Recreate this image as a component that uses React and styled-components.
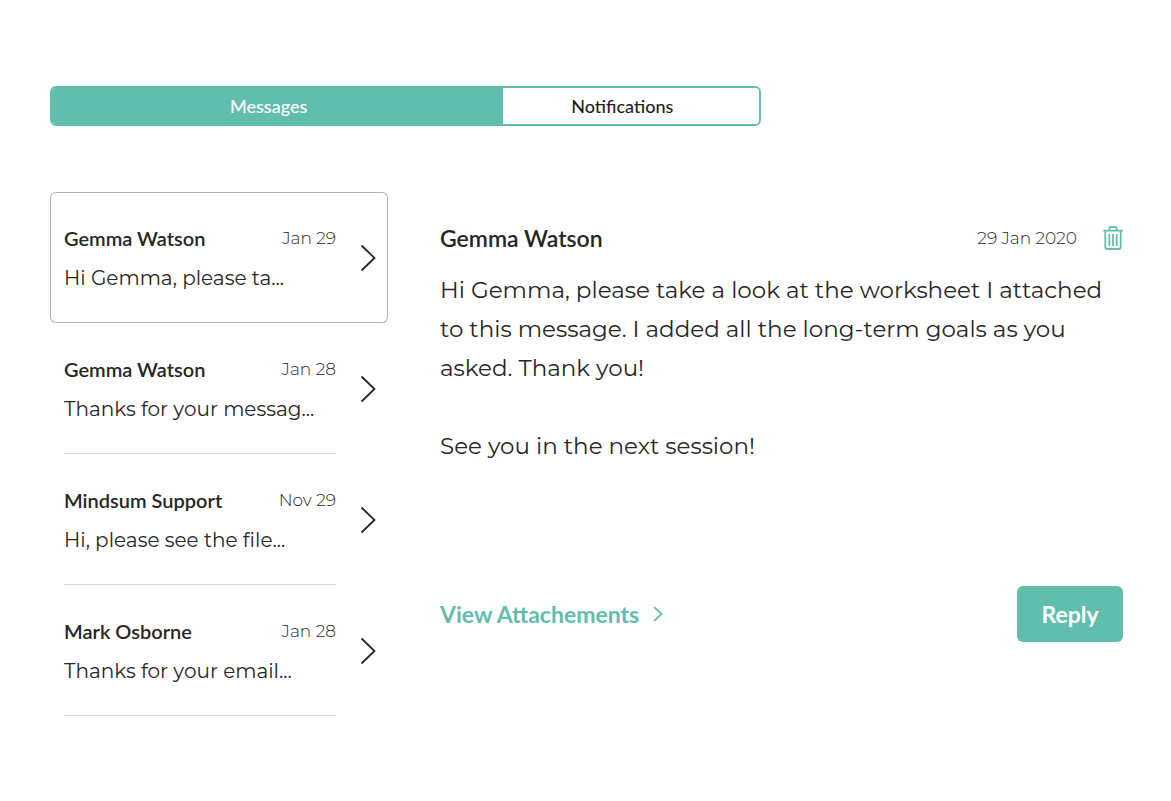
import React, { useState } from 'react'
import styled, { createGlobalStyle } from 'styled-components'

const GlobalStyle = createGlobalStyle`
* {
  box-sizing: border-box;
}

body {
  margin: 0;
  background: #fff;
  color: #262626;
  font-family: Montserrat, Inter, sans-serif;
}

button {
  padding: 0;
  border: none;
  background: none;
  color: inherit;
  font: inherit;
  cursor: pointer;
}
`

const Container = styled.main`
padding: 86px 48px 86px 50px;
`

const Tabs = styled.div`
display: grid;
grid-template-columns: 451fr 256fr;
width: 66.3%;
height: 40px;
border: 2px solid #62beac;
border-radius: 6px;
overflow: hidden;
`

const Tab = styled.button`
&& {
  padding-right: 18px;
  background: ${({ $active }) => ($active ? '#62beac' : '#fff')};
  color: ${({ $active }) => ($active ? '#fff' : '#1f1f1f')};
  font-family: Lato, sans-serif;
  font-size: 18px;
  font-weight: 500;
}
`

const Layout = styled.div`
display: grid;
grid-template-columns: 338fr 683fr;
gap: 52px;
margin-top: 66px;
align-items: start;
`

const List = styled.ul`
margin: 0;
padding: 0;
list-style: none;
`

const Item = styled.button`
&& {
  display: flex;
  width: 100%;
  height: 131px;
  padding: 0 12px 0 14px;
  gap: 24px;
  align-items: center;
  text-align: left;
  border-radius: 6px;
  box-shadow: ${({ $active }) => ($active ? 'inset 0 0 0 1px #b0b0b0' : 'none')};
}
`

const Summary = styled.span`
flex: 1;
min-width: 0;
height: 100%;
padding: 26px 0;
border-bottom: 1px solid ${({ $active }) => ($active ? 'transparent' : '#d6d6d6')};
`

const Line = styled.span`
display: flex;
justify-content: space-between;
align-items: center;
line-height: 40px;
`

const Name = styled.span`
font-family: Lato, sans-serif;
font-size: 20px;
font-weight: 600;
`

const Day = styled.time`
font-size: 17px;
font-weight: 300;
`

const Excerpt = styled.span`
display: block;
font-size: 20px;
font-weight: 400;
line-height: 40px;
white-space: nowrap;
`

const Detail = styled.article`
padding-top: 26px;
`

const Header = styled.header`
display: flex;
align-items: center;
height: 40px;
gap: 26px;
`

const Title = styled.h1`
flex: 1;
margin: 0;
font-family: Lato, sans-serif;
font-size: 23px;
font-weight: 600;
`

const Body = styled.div`
margin-top: 13px;
font-size: 23px;
font-weight: 400;
line-height: 39px;

p {
  margin: 0 0 39px;
}
`

const Footer = styled.footer`
display: flex;
justify-content: space-between;
align-items: center;
margin-top: 120px;
`

const Attachments = styled.a`
display: flex;
align-items: center;
gap: 14px;
color: #62beac;
font-family: Lato, sans-serif;
font-size: 23px;
font-weight: 700;
text-decoration: none;
`

const Reply = styled.button`
&& {
  width: 106px;
  height: 56px;
  border-radius: 6px;
  background: #62beac;
  color: #fff;
  font-family: Lato, sans-serif;
  font-size: 23px;
  font-weight: 700;
}
`

const Icon = styled.svg`
display: block;
flex: none;
fill: none;
stroke: currentColor;
`

const Delete = styled.button`
&& {
  color: #62beac;
}
`

const messages = [
  { id: 1, name: 'Gemma Watson', date: 'Jan 29', excerpt: 'Hi Gemma, please ta...' },
  { id: 2, name: 'Gemma Watson', date: 'Jan 28', excerpt: 'Thanks for your messag...' },
  { id: 3, name: 'Mindsum Support', date: 'Nov 29', excerpt: 'Hi, please see the file...' },
  { id: 4, name: 'Mark Osborne', date: 'Jan 28', excerpt: 'Thanks for your email...' },
]

const TrashIcon = () => (
  <Icon width="20" height="24" viewBox="0 0 20 24" strokeWidth="1.8" aria-hidden="true">
    <path d="M0.3 4.6h19.4M6.4 4.4V2.6Q6.4 1 8 1h4Q13.6 1 13.6 2.6V4.4" />
    <path d="M2.3 4.6V21Q2.3 23 4.4 23H15.6Q17.7 23 17.7 21V4.6" />
    <path d="M6.3 8v12M10 8v12M13.7 8v12" />
  </Icon>
)

const App = () => {
  const [tab, setTab] = useState('messages')
  const [selected, setSelected] = useState(1)

  return (
    <Container>
      <GlobalStyle />
      <Tabs role="tablist">
        <Tab role="tab" $active={tab === 'messages'} aria-selected={tab === 'messages'} onClick={() => setTab('messages')}>
          Messages
        </Tab>
        <Tab role="tab" $active={tab === 'notifications'} aria-selected={tab === 'notifications'} onClick={() => setTab('notifications')}>
          Notifications
        </Tab>
      </Tabs>
      <Layout>
        <List>
          {messages.map((message) => (
            <li key={message.id}>
              <Item $active={message.id === selected} onClick={() => setSelected(message.id)}>
                <Summary $active={message.id === selected}>
                  <Line>
                    <Name>{message.name}</Name>
                    <Day>{message.date}</Day>
                  </Line>
                  <Excerpt>{message.excerpt}</Excerpt>
                </Summary>
                <Icon width="16" height="28" viewBox="0 0 16 28" strokeWidth="1.8" aria-hidden="true">
                  <path d="M1.5 1.5L14.5 14L1.5 26.5" />
                </Icon>
              </Item>
            </li>
          ))}
        </List>
        <Detail>
          <Header>
            <Title>Gemma Watson</Title>
            <Day>29 Jan 2020</Day>
            <Delete aria-label="Delete message">
              <TrashIcon />
            </Delete>
          </Header>
          <Body>
            <p>
              Hi Gemma, please take a look at the worksheet I attached to this message. I added all
              the long-term goals as you asked. Thank you!
            </p>
            <p>See you in the next session!</p>
          </Body>
          <Footer>
            <Attachments href="#attachments">
              View Attachements
              <Icon width="10" height="16" viewBox="0 0 10 16" strokeWidth="1.8" aria-hidden="true">
                <path d="M1.2 1.2L8.6 8L1.2 14.8" />
              </Icon>
            </Attachments>
            <Reply>Reply</Reply>
          </Footer>
        </Detail>
      </Layout>
    </Container>
  )
}

export default App
